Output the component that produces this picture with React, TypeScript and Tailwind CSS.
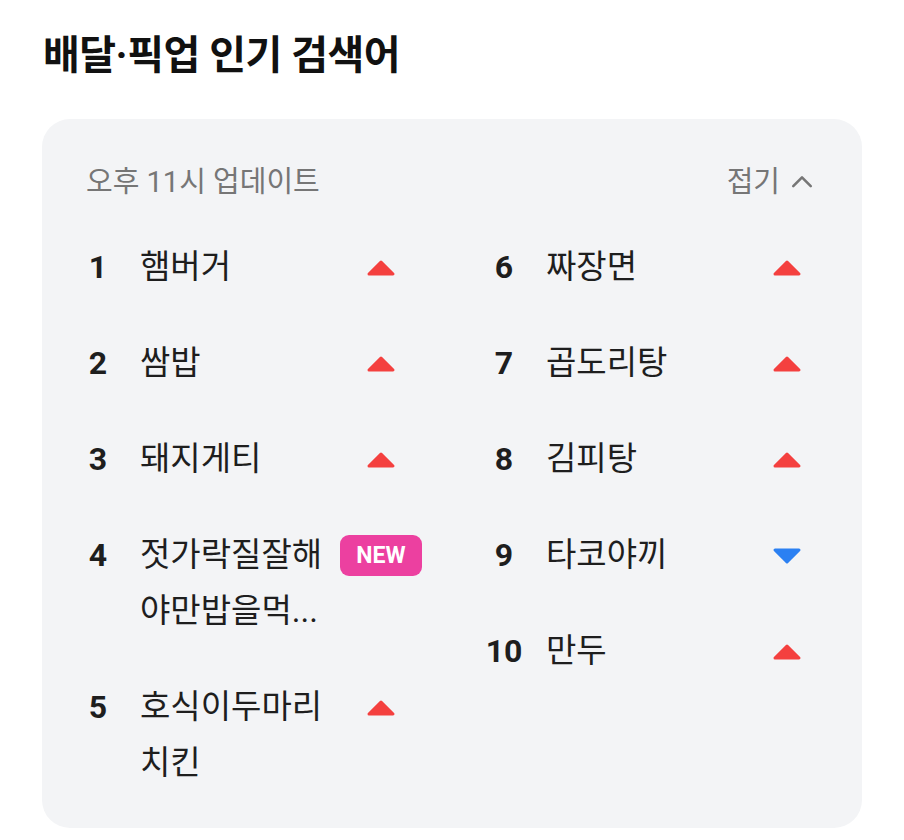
import React from "react";

type Trend = "up" | "down" | "new";

interface Keyword {
  rank: number;
  text: string[];
  trend: Trend;
}

const LEFT: Keyword[] = [
  { rank: 1, text: ["햄버거"], trend: "up" },
  { rank: 2, text: ["쌈밥"], trend: "up" },
  { rank: 3, text: ["돼지게티"], trend: "up" },
  { rank: 4, text: ["젓가락질잘해", "야만밥을먹..."], trend: "new" },
  { rank: 5, text: ["호식이두마리", "치킨"], trend: "up" },
];

const RIGHT: Keyword[] = [
  { rank: 6, text: ["짜장면"], trend: "up" },
  { rank: 7, text: ["곱도리탕"], trend: "up" },
  { rank: 8, text: ["김피탕"], trend: "up" },
  { rank: 9, text: ["타코야끼"], trend: "down" },
  { rank: 10, text: ["만두"], trend: "up" },
];

const FONT = {
  fontFamily: '"Roboto", "Noto Sans CJK KR", "Noto Sans", sans-serif',
};

function TrendMark({ trend }: { trend: Trend }) {
  if (trend === "new") {
    return (
      <span className="flex h-[41px] w-[83px] items-center justify-center rounded-[9px] bg-[#ec40a0] text-[23px] font-bold leading-none text-white">
        NEW
      </span>
    );
  }
  const up = trend === "up";
  return (
    <svg width="30" height="18" viewBox="0 0 30 18" className="mt-[1px]">
      <polygon
        points={up ? "15,3 27,15 3,15" : "3,3 27,3 15,15"}
        fill={up ? "#f4403f" : "#2b80f2"}
        stroke={up ? "#f4403f" : "#2b80f2"}
        strokeWidth={3}
        strokeLinejoin="round"
      />
    </svg>
  );
}

function Row({ item }: { item: Keyword }) {
  return (
    <div className="flex items-start">
      <span className="w-10 shrink-0 text-center text-[32px] font-bold leading-[56px] text-[#1e1e1e]">
        {item.rank}
      </span>
      <div className="ml-[22px] w-[200px] shrink-0 text-[33px] leading-[56px] text-[#1e1e1e]">
        {item.text.map((t) => (
          <div key={t}>{t}</div>
        ))}
      </div>
      <div className="flex h-[56px] w-[82px] shrink-0 items-center justify-center">
        <TrendMark trend={item.trend} />
      </div>
    </div>
  );
}

export default function App() {
  return (
    <div className="min-h-[840px] bg-white px-[42px] pt-[31px]" style={FONT}>
      <h1 className="pl-[1px] text-[40px] font-bold leading-[50px] tracking-[-0.5px] text-[#111]">
        배달·픽업 인기 검색어
      </h1>

      <div className="mt-[38px] rounded-[28px] bg-[#f3f4f6] pb-[37px] pt-[45px]">
        <div className="flex items-center justify-between pl-[44px] pr-[46px] text-[29px] leading-[36px] text-[#767676]">
          <span>오후 11시 업데이트</span>
          <span className="flex items-center gap-[8px]">
            접기
            <svg width="28" height="28" viewBox="0 0 24 24" fill="none">
              <path
                d="M4.5 15.5 12 8l7.5 7.5"
                stroke="#767676"
                strokeWidth={2.2}
                strokeLinecap="round"
                strokeLinejoin="round"
              />
            </svg>
          </span>
        </div>

        <div className="mt-[39px] flex pl-[36px]">
          <div className="flex w-[406px] flex-col gap-10">
            {LEFT.map((k) => (
              <Row key={k.rank} item={k} />
            ))}
          </div>
          <div className="flex flex-col gap-10">
            {RIGHT.map((k) => (
              <Row key={k.rank} item={k} />
            ))}
          </div>
        </div>
      </div>
    </div>
  );
}
